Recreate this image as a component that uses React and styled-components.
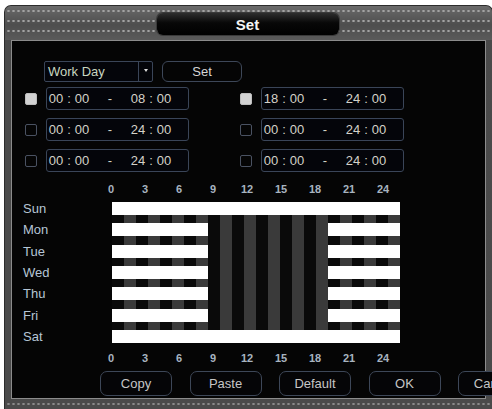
import styled, { createGlobalStyle } from "styled-components";

const GlobalStyle = createGlobalStyle`
	html, body {
		margin: 0;
		padding: 0;
		background: #ffffff;
		overflow: hidden;
		font-family: "Liberation Sans", Arial, sans-serif;
	}
`;

const HOURS = [0, 3, 6, 9, 12, 15, 18, 21, 24];

// segments per day, in hours [start, end]
const schedule = [
	{ day: "Sun", segs: [[0, 24]] },
	{ day: "Mon", segs: [[0, 8], [18, 24]] },
	{ day: "Tue", segs: [[0, 8], [18, 24]] },
	{ day: "Wed", segs: [[0, 8], [18, 24]] },
	{ day: "Thu", segs: [[0, 8], [18, 24]] },
	{ day: "Fri", segs: [[0, 8], [18, 24]] },
	{ day: "Sat", segs: [[0, 24]] },
];

const periods = [
	[
		{ on: true, from: ["00", "00"], to: ["08", "00"] },
		{ on: false, from: ["00", "00"], to: ["24", "00"] },
		{ on: false, from: ["00", "00"], to: ["24", "00"] },
	],
	[
		{ on: true, from: ["18", "00"], to: ["24", "00"] },
		{ on: false, from: ["00", "00"], to: ["24", "00"] },
		{ on: false, from: ["00", "00"], to: ["24", "00"] },
	],
];

const TimeBox = ({ from, to }) => (
	<Box>
		<Field>{from[0]}</Field>
		<Colon>:</Colon>
		<Field>{from[1]}</Field>
		<Dash>-</Dash>
		<Field>{to[0]}</Field>
		<Colon>:</Colon>
		<Field>{to[1]}</Field>
	</Box>
);

const Axis = () => (
	<AxisRow>
		{HOURS.map((h) => (
			<AxisLabel key={h}>{h}</AxisLabel>
		))}
	</AxisRow>
);

export default function App() {
	return (
		<Page>
			<GlobalStyle />
			<Window>
				<Header>
					<TitlePill>Set</TitlePill>
				</Header>
				<Panel>
					<TopRow>
						<Select>
							<SelectText>Work Day</SelectText>
							<ArrowCell>
								<Arrow />
							</ArrowCell>
						</Select>
						<SmallButton>Set</SmallButton>
					</TopRow>

					<PeriodGrid>
						{periods.map((col, ci) => (
							<PeriodColumn key={ci}>
								{col.map((p, i) => (
									<PeriodRow key={i}>
										<Check $on={p.on} />
										<TimeBox from={p.from} to={p.to} />
									</PeriodRow>
								))}
							</PeriodColumn>
						))}
					</PeriodGrid>

					<Chart>
						<span />
						<Axis />
						<DayList>
							{schedule.map((d) => (
								<DayLabel key={d.day}>{d.day}</DayLabel>
							))}
						</DayList>
						<Track>
							{schedule.map((d) => (
								<BarRow key={d.day}>
									{d.segs.map(([s, e]) => (
										<Bar key={s} style={{ gridColumn: `${s + 1} / ${e + 1}` }} />
									))}
								</BarRow>
							))}
						</Track>
						<span />
						<Axis />
					</Chart>

					<ButtonRow>
						<Button>Copy</Button>
						<Button>Paste</Button>
						<Button>Default</Button>
						<Button>OK</Button>
						<Button>Cancel</Button>
					</ButtonRow>
				</Panel>
				<Footer />
			</Window>
		</Page>
	);
}

const Page = styled.div`
	padding: 5px 0 0 4px;
	width: 492px;
	height: 409px;
	box-sizing: border-box;
	overflow: hidden;
`;

const Window = styled.div`
	width: 489px;
	border: 1px solid #2c2c2c;
	border-bottom: none;
	border-radius: 7px 7px 0 0;
	background: linear-gradient(to right, #4a4a4a, #575757 50%, #4a4a4a);
	box-sizing: border-box;
	display: flex;
	flex-direction: column;
`;

const Header = styled.div`
	height: 34px;
	border-radius: 6px 6px 0 0;
	background-color: #585858;
	background-image: radial-gradient(circle, #a2a2a2 0.9px, transparent 1.5px),
		linear-gradient(to bottom, #6a6a6a, #4e4e4e 55%, #5a5a5a);
	background-size: 5px 10px, 100% 100%;
	background-position: 1px 0px, 0 0;
	display: flex;
	align-items: center;
	justify-content: center;
	padding-right: 2px;
`;

const TitlePill = styled.div`
	width: 182px;
	height: 22px;
	margin-top: 2px;
	border-radius: 6px;
	background: linear-gradient(to bottom, #2e2e2e, #080808 45%, #000);
	box-shadow: 0 0 0 1px #3a3a3a;
	color: #f4f4f4;
	font-weight: bold;
	font-size: 15px;
	display: flex;
	align-items: center;
	justify-content: center;
`;

const Panel = styled.div`
	margin: 0 6px;
	width: 475px;
	height: 359px;
	box-sizing: border-box;
	border: 1px solid #8c8c8c;
	background: #050505;
	display: flex;
	flex-direction: column;
	padding-top: 20px;
`;

const TopRow = styled.div`
	display: flex;
	gap: 9px;
	padding-left: 32px;
	height: 21px;
`;

const Select = styled.div`
	width: 109px;
	box-sizing: border-box;
	border: 1px solid #3a4558;
	border-radius: 2px;
	display: flex;
	background: #04050a;
`;

const SelectText = styled.div`
	flex: 1;
	color: #c8d6c0;
	font-size: 13px;
	line-height: 19px;
	padding-left: 3px;
`;

const ArrowCell = styled.div`
	width: 14px;
	border-left: 1px solid #3a4558;
	display: flex;
	justify-content: center;
	padding-top: 7px;
	box-sizing: border-box;
`;

const Arrow = styled.div`
	width: 0;
	height: 0;
	border-left: 2.5px solid transparent;
	border-right: 2.5px solid transparent;
	border-top: 3px solid #dcdcdc;
`;

const SmallButton = styled.div`
	width: 80px;
	box-sizing: border-box;
	border: 1px solid #3d4758;
	border-radius: 6px;
	color: #d6d6d6;
	font-size: 13px;
	display: flex;
	align-items: center;
	justify-content: center;
`;

const PeriodGrid = styled.div`
	display: grid;
	grid-template-columns: 215px 200px;
	padding-left: 13px;
	margin-top: 5px;
`;

const PeriodColumn = styled.div`
	display: flex;
	flex-direction: column;
	gap: 8px;
`;

const PeriodRow = styled.div`
	display: flex;
	align-items: center;
	gap: 9px;
	height: 23px;
`;

const Check = styled.div`
	width: 12px;
	height: 12px;
	box-sizing: border-box;
	border-radius: 2px;
	border: 1px solid ${(p) => (p.$on ? "#bdbdbd" : "#4a5262")};
	background: ${(p) => (p.$on ? "#d2d2d2" : "transparent")};
`;

const Box = styled.div`
	width: 143px;
	height: 23px;
	box-sizing: border-box;
	border: 1px solid #3a4558;
	border-radius: 3px;
	background: #04050a;
	display: flex;
	align-items: center;
	color: #d4d2c8;
	font-size: 13px;
`;

const Field = styled.span`
	width: 18px;
	text-align: center;
`;

const Colon = styled.span`
	width: 8px;
	text-align: center;
`;

const Dash = styled.span`
	width: 38px;
	text-align: center;
`;

const Chart = styled.div`
	display: grid;
	grid-template-columns: 100px 288px;
	margin-top: 10px;
`;

const AxisRow = styled.div`
	display: flex;
	margin-left: -18px;
	height: 14px;
`;

const AxisLabel = styled.div`
	width: 36px;
	text-align: center;
	color: #a8b4c0;
	font-size: 11px;
	font-weight: bold;
	line-height: 14px;
`;

const DayList = styled.div`
	display: flex;
	flex-direction: column;
	gap: 8.33px;
	padding-left: 11px;
	margin: 6px 0 8px;
`;

const DayLabel = styled.div`
	height: 13px;
	line-height: 13px;
	color: #b6c6d6;
	font-size: 13px;
`;

const Track = styled.div`
	display: flex;
	flex-direction: column;
	gap: 8.33px;
	margin: 6px 0 8px;
	background: repeating-linear-gradient(
		to right,
		#0a0a0a 0 12px,
		#3a3a3a 12px 24px
	);
`;

const BarRow = styled.div`
	display: grid;
	grid-template-columns: repeat(24, 12px);
	height: 13px;
`;

const Bar = styled.div`
	background: #ffffff;
`;

const ButtonRow = styled.div`
	display: flex;
	gap: 17.5px;
	padding-left: 88px;
	margin-top: 6px;
`;

const Button = styled.div`
	flex: 0 0 72px;
	height: 25px;
	box-sizing: border-box;
	border: 1px solid #3d4758;
	border-radius: 7px;
	background: #050507;
	color: #c6c6c6;
	font-size: 13px;
	display: flex;
	align-items: center;
	justify-content: center;
`;

const Footer = styled.div`
	height: 12px;
	background-color: #4a4a4a;
	background-image: radial-gradient(circle, #8a8a8a 0.9px, transparent 1.5px);
	background-size: 5px 10px;
	background-position: 1px 0px;
`;
